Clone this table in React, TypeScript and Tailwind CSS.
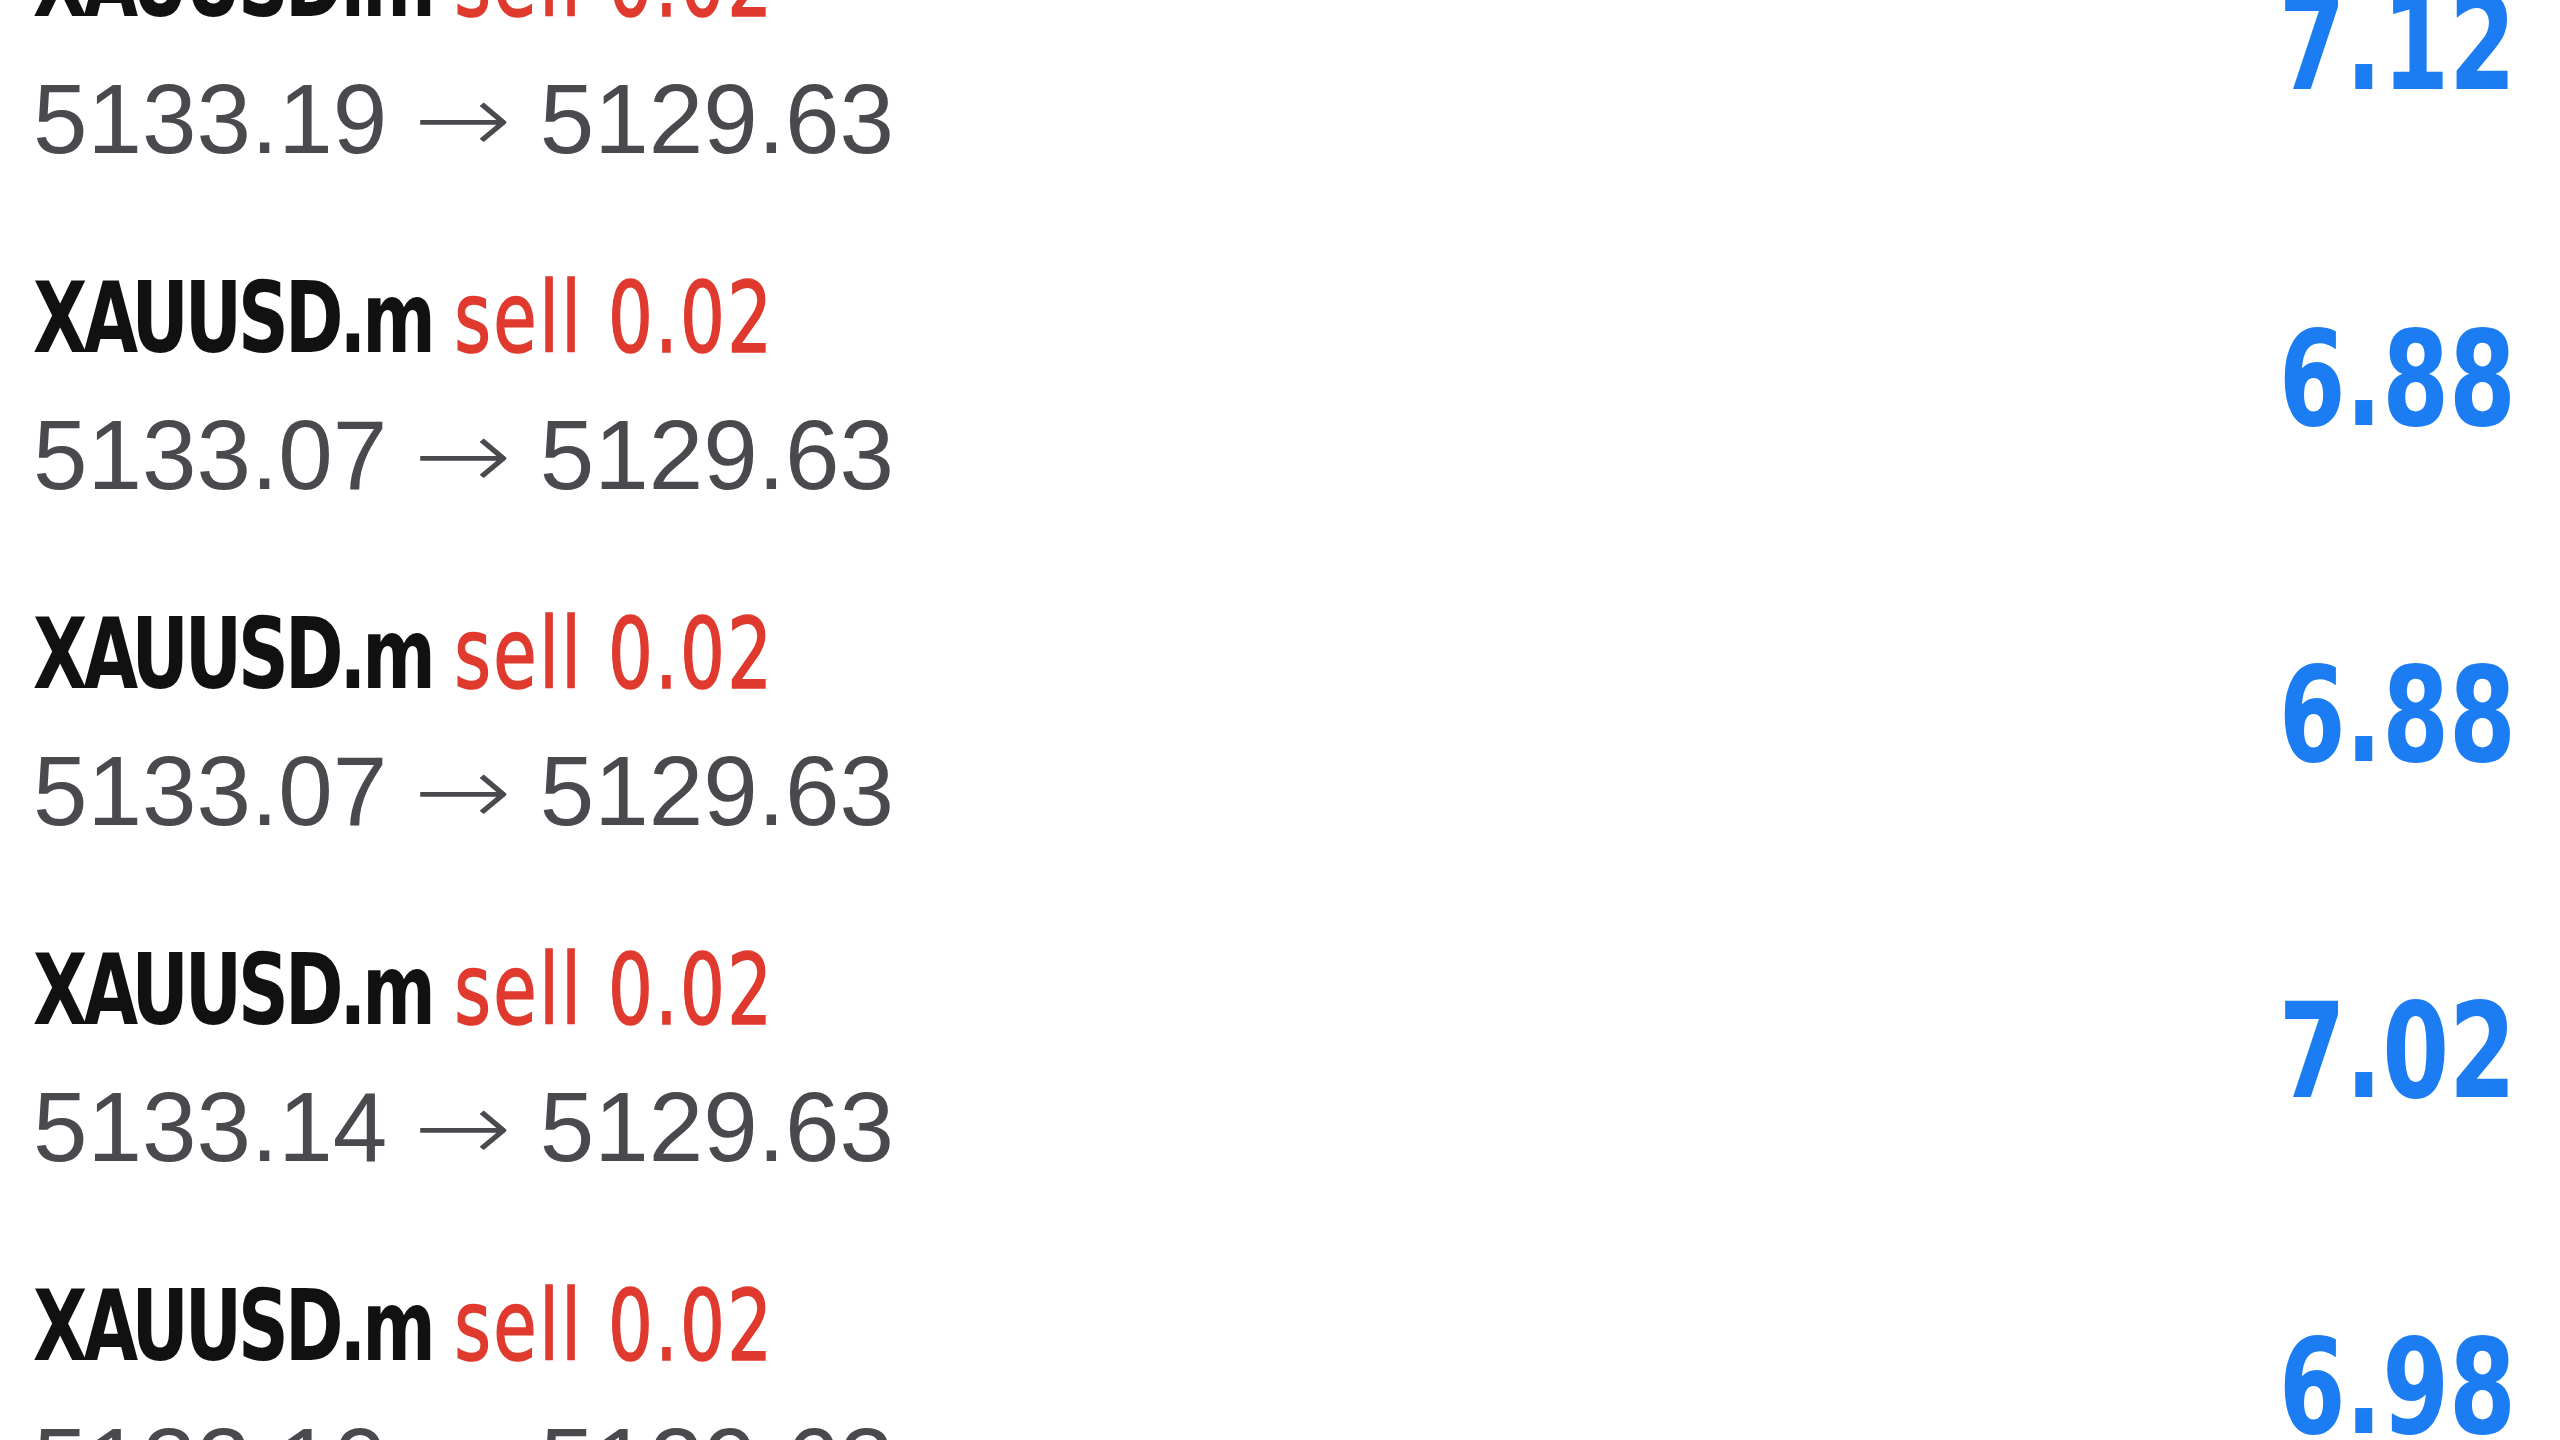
import React from 'react';

interface Trade {
  symbol: string;
  side: string;
  lots: string;
  open: string;
  close: string;
  profit: string;
}

const trades: Trade[] = [
  { symbol: 'XAUUSD.m', side: 'sell', lots: '0.02', open: '5133.19', close: '5129.63', profit: '7.12' },
  { symbol: 'XAUUSD.m', side: 'sell', lots: '0.02', open: '5133.07', close: '5129.63', profit: '6.88' },
  { symbol: 'XAUUSD.m', side: 'sell', lots: '0.02', open: '5133.07', close: '5129.63', profit: '6.88' },
  { symbol: 'XAUUSD.m', side: 'sell', lots: '0.02', open: '5133.14', close: '5129.63', profit: '7.02' },
  { symbol: 'XAUUSD.m', side: 'sell', lots: '0.02', open: '5133.10', close: '5129.63', profit: '6.98' },
];

// condensed face, squeezed a bit more to match the iOS condensed font
const narrow = "font-['DejaVu_Sans_Condensed','DejaVu_Sans',sans-serif]";

const TradeRow: React.FC<{ trade: Trade }> = ({ trade }) => (
  <div className="flex h-[336px] items-center justify-between pl-[33px] pr-[44px]">
    <div className="flex flex-col">
      <div className={`${narrow} origin-left scale-x-[0.8] text-[98px] leading-[110px] whitespace-nowrap`}>
        <span className="font-bold tracking-[-5px] text-[#111111]">{trade.symbol}</span>{' '}
        <span className="tracking-[3px] text-[#e03a2e] [-webkit-text-stroke:1.5px_#e03a2e]">
          {trade.side} {trade.lots}
        </span>
      </div>
      <div className="mt-[27px] font-['Liberation_Sans',Arial,sans-serif] text-[98px] leading-[110px] whitespace-nowrap text-[#4a4a4e]">
        {trade.open}{' '}
        <span className="mx-[8px] inline-block scale-x-[1.2] font-['DejaVu_Sans',sans-serif] font-extralight">→</span>{' '}
        {trade.close}
      </div>
    </div>
    <div className={`${narrow} mb-[14px] origin-right scale-x-[0.81] text-[132px] leading-[132px] font-bold text-[#1c7df3]`}>
      {trade.profit}
    </div>
  </div>
);

export default function App() {
  return (
    <div className="h-[1440px] w-[2560px] overflow-hidden bg-white">
      <div className="-mt-[118px]">
        {trades.map((t, i) => (
          <TradeRow key={i} trade={t} />
        ))}
      </div>
    </div>
  );
}
